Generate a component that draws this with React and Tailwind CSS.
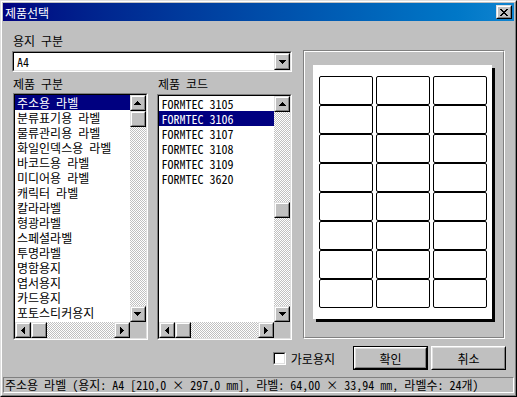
import React from "react";

const font = "font-['Noto_Sans_Mono_CJK_KR','Noto_Sans_CJK_KR',sans-serif]";
const dither =
  "bg-[image:repeating-conic-gradient(#c0c0c0_0%_25%,#ffffff_0%_50%)] bg-[length:2px_2px]";

const paperTypes = [
  "주소용 라벨",
  "분류표기용 라벨",
  "물류관리용 라벨",
  "화일인덱스용 라벨",
  "바코드용 라벨",
  "미디어용 라벨",
  "캐릭터 라벨",
  "칼라라벨",
  "형광라벨",
  "스페셜라벨",
  "투명라벨",
  "명함용지",
  "엽서용지",
  "카드용지",
  "포토스티커용지",
];

const codes = [
  "FORMTEC 3105",
  "FORMTEC 3106",
  "FORMTEC 3107",
  "FORMTEC 3108",
  "FORMTEC 3109",
  "FORMTEC 3620",
];

const arrows = {
  up: { w: 7, h: 4, d: "M3 0h1v1h1v1h1v1h1v1H0V3h1V2h1V1h1z" },
  down: { w: 7, h: 4, d: "M0 0h7v1h-1v1h-1v1h-1v1h-1v-1h-1v-1h-1v-1h-1z" },
  left: { w: 4, h: 7, d: "M3 0h1v7h-1v-1h-1v-1h-1v-1h-1v-1h1v-1h1v-1h1z" },
  right: { w: 4, h: 7, d: "M0 0h1v1h1v1h1v1h1v1h-1v1h-1v1h-1v1h-1z" },
};

function Arrow({ dir }) {
  const a = arrows[dir];
  return (
    <svg width={a.w} height={a.h} viewBox={`0 0 ${a.w} ${a.h}`} shapeRendering="crispEdges">
      <path d={a.d} fill="#000" />
    </svg>
  );
}

// raised 3d box used by scroll buttons and thumbs
function Raised({ children, className = "" }) {
  return (
    <div className={`border border-t-[#dfdfdf] border-l-[#dfdfdf] border-r-black border-b-black ${className}`}>
      <div className="w-full h-full border border-t-white border-l-white border-r-[#808080] border-b-[#808080] bg-[#c0c0c0] flex items-center justify-center">
        {children}
      </div>
    </div>
  );
}

function VScroll({ thumbOffset }) {
  return (
    <div className="w-[16px] flex flex-col shrink-0">
      <Raised className="h-[16px]">
        <Arrow dir="up" />
      </Raised>
      <div className={`flex-1 flex flex-col ${dither}`}>
        <div style={{ height: thumbOffset }} />
        <Raised className="h-[16px]" />
      </div>
      <Raised className="h-[16px]">
        <Arrow dir="down" />
      </Raised>
    </div>
  );
}

function HScroll() {
  return (
    <div className="flex-1 flex">
      <Raised className="w-[16px]">
        <Arrow dir="left" />
      </Raised>
      <div className={`flex-1 flex ${dither}`}>
        <Raised className="w-[16px]" />
      </div>
      <Raised className="w-[16px]">
        <Arrow dir="right" />
      </Raised>
    </div>
  );
}

function Sunken({ children, className = "", inner = "" }) {
  return (
    <div className={`border border-t-[#808080] border-l-[#808080] border-r-white border-b-white ${className}`}>
      <div className={`w-full h-full border border-t-black border-l-black border-r-[#dfdfdf] border-b-[#dfdfdf] bg-white ${inner}`}>
        {children}
      </div>
    </div>
  );
}

function ListBox({ items, selected, thumbOffset, textPad, className }) {
  return (
    <Sunken className={className} inner="flex flex-col">
      <div className="flex-1 flex min-h-0">
        <div className="flex-1 overflow-hidden">
          {items.map((it, i) => (
            <div
              key={it}
              className={`h-[15px] leading-[15px] whitespace-nowrap ${textPad} ${
                i === selected ? "bg-[#000080] text-white" : ""
              }`}
            >
              {it}
            </div>
          ))}
        </div>
        <VScroll thumbOffset={thumbOffset} />
      </div>
      <div className="flex h-[16px] shrink-0">
        <HScroll />
        <div className="w-[16px] bg-[#c0c0c0]" />
      </div>
    </Sunken>
  );
}

function Button({ children, isDefault }) {
  return (
    <div className={`w-[75px] h-[24px] ${isDefault ? "border border-black" : ""}`}>
      <div className="w-full h-full border border-t-white border-l-white border-r-black border-b-black">
        <div className="w-full h-full border border-t-[#dfdfdf] border-l-[#dfdfdf] border-r-[#808080] border-b-[#808080] flex items-center justify-center">
          {children}
        </div>
      </div>
    </div>
  );
}

function CloseGlyph() {
  const rows = [
    [[0, 2], [6, 2]],
    [[1, 2], [5, 2]],
    [[2, 4]],
    [[3, 2]],
    [[2, 4]],
    [[1, 2], [5, 2]],
    [[0, 2], [6, 2]],
  ];
  return (
    <svg width="8" height="7" viewBox="0 0 8 7" shapeRendering="crispEdges">
      {rows.map((r, y) =>
        r.map(([x, w]) => <rect key={`${y}-${x}`} x={x} y={y} width={w} height="1" fill="#000" />)
      )}
    </svg>
  );
}

export default function App() {
  return (
    <div
      className={`w-[517px] h-[397px] bg-[#c0c0c0] border border-t-[#dfdfdf] border-l-[#dfdfdf] border-r-black border-b-black text-[12px] leading-[15px] text-black ${font}`}
    >
      <div className="w-full h-full border border-t-white border-l-white border-r-[#808080] border-b-[#808080] p-px flex flex-col">
        {/* Title bar */}
        <div className="h-[18px] shrink-0 flex items-center justify-between pl-[2px] pr-[2px] bg-gradient-to-r from-[#000080] to-[#1084d0]">
          <span className="text-white text-[12px]">제품선택</span>
          <Raised className="w-[16px] h-[14px]">
            <CloseGlyph />
          </Raised>
        </div>

        {/* Body */}
        <div className="flex pl-[9px] pt-[12px]">
          <div className="w-[280px] flex flex-col">
            <div className="pl-[1px]">용지 구분</div>
            <Sunken className="mt-[3px] h-[21px]" inner="flex items-center">
              <span className="flex-1 pl-[3px]">A4</span>
              <Raised className="w-[16px] h-[17px]">
                <Arrow dir="down" />
              </Raised>
            </Sunken>
            <div className="mt-[4px] flex">
              <span className="w-[146px] pl-[1px]">제품 구분</span>
              <span>제품 코드</span>
            </div>
            <div className="mt-[2px] flex items-start">
              <ListBox
                items={paperTypes}
                selected={0}
                thumbOffset={0}
                textPad="pl-[2px]"
                className="ml-[1px] w-[135px] h-[247px]"
              />
              <ListBox
                items={codes}
                selected={1}
                thumbOffset={90}
                textPad="pl-[3px]"
                className="ml-[9px] mt-[1px] w-[136px] h-[246px]"
              />
            </div>
          </div>

          {/* Preview group */}
          <div className="ml-[11px] mt-[17px] w-[202px] h-[289px] border border-t-[#808080] border-l-[#808080] border-r-white border-b-white">
            <div className="w-full h-full border border-t-white border-l-white border-r-[#808080] border-b-[#808080] pl-[8px] pt-[13px]">
              <div className="w-[179px] h-[254px] bg-white shadow-[3px_3px_0_#000] pl-[6px] pt-[11px]">
                <div className="grid grid-cols-[repeat(3,54px)] gap-x-[3px]">
                  {Array.from({ length: 24 }).map((_, i) => (
                    <div key={i} className="h-[29px] border border-black rounded-[2px]" />
                  ))}
                </div>
              </div>
            </div>
          </div>
        </div>

        {/* Bottom row */}
        <div className="mt-[6px] h-[24px] flex items-center justify-end pr-[8px]">
          <Sunken className="w-[13px] h-[13px]" />
          <span className="ml-[5px] mr-[18px]">가로용지</span>
          <Button isDefault>확인</Button>
          <div className="w-[3px]" />
          <Button>취소</Button>
        </div>

        {/* Status bar */}
        <div className="mt-[7px] h-[16px] border border-t-[#808080] border-l-[#808080] border-r-white border-b-white px-[1px] leading-[14px] whitespace-nowrap overflow-hidden">
          주소용 라벨 (용지: A4 [210,0 × 297,0 ㎜], 라벨: 64,00 × 33,94 ㎜, 라벨수: 24개)
        </div>
      </div>
    </div>
  );
}
